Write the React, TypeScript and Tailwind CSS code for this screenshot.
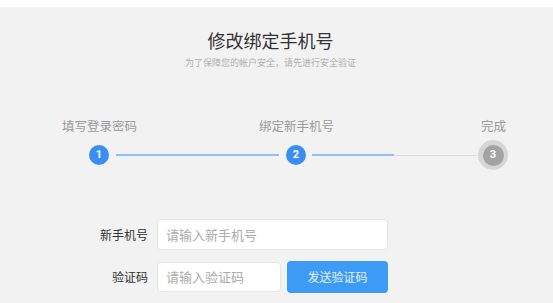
import React from "react";

export default function App() {
  return (
    <div className="w-[553px] h-[303px] overflow-hidden bg-white font-['Noto_Sans_CJK_SC','Noto_Sans',sans-serif]">
      <div className="mt-[7px] h-[296px] bg-[#f2f2f2]">
        <div className="w-[541px] pt-[21px] text-center">
          <h1 className="text-[18px] leading-[24px] text-[#333]">修改绑定手机号</h1>
          <p className="mt-[5px] text-[9px] leading-[12px] text-[#b0b0b0]">为了保障您的帐户安全，请先进行安全验证</p>
        </div>

        <div className="mt-[49px] flex w-[600px] pl-[1px] text-[12.5px] leading-[16px] text-[#9a9a9a]">
          <div className="w-[197px] text-center">填写登录密码</div>
          <div className="w-[197px] text-center">绑定新手机号</div>
          <div className="w-[197px] text-center">完成</div>
        </div>

        <div className="mt-[6px] flex h-[30px] items-center pl-[89px]">
          <div className="flex h-[20px] w-[20px] items-center justify-center rounded-full bg-[#3a8ef2] text-[11px] font-bold text-white font-['Roboto',sans-serif]">1</div>
          <div className="ml-[7px] h-[2px] w-[163px] bg-[#8ec2f8]" />
          <div className="ml-[7px] flex h-[20px] w-[20px] items-center justify-center rounded-full bg-[#3a8ef2] text-[11px] font-bold text-white font-['Roboto',sans-serif]">2</div>
          <div className="ml-[6px] h-[2px] w-[82px] bg-[#8ec2f8]" />
          <div className="h-[1px] w-[83px] bg-[#dcdcdc]" />
          <div className="ml-[1px] flex h-[30px] w-[30px] items-center justify-center rounded-full bg-[#d6d6d6]">
            <div className="flex h-[21px] w-[21px] items-center justify-center rounded-full bg-[#a3a3a3] text-[11px] font-bold text-white font-['Roboto',sans-serif]">3</div>
          </div>
        </div>

        <div className="mt-[49px] flex items-center">
          <div className="w-[148px] text-right text-[12px] text-[#333]">新手机号</div>
          <div className="ml-[9px] flex h-[31px] w-[231px] items-center rounded-[4px] border border-[#e6e6e6] bg-white pl-[8px] text-[13px] text-[#ababab]">请输入新手机号</div>
        </div>
        <div className="mt-[11px] flex items-center">
          <div className="w-[148px] text-right text-[12px] text-[#333]">验证码</div>
          <div className="ml-[9px] flex h-[30px] w-[124px] items-center rounded-[4px] border border-[#e6e6e6] bg-white pl-[8px] text-[13px] text-[#ababab]">请输入验证码</div>
          <div className="ml-[6px] flex h-[32px] w-[101px] items-center justify-center rounded-[4px] bg-[#3d9bf6] text-[12px] text-[#e6f1fd]">发送验证码</div>
        </div>
      </div>
    </div>
  );
}
